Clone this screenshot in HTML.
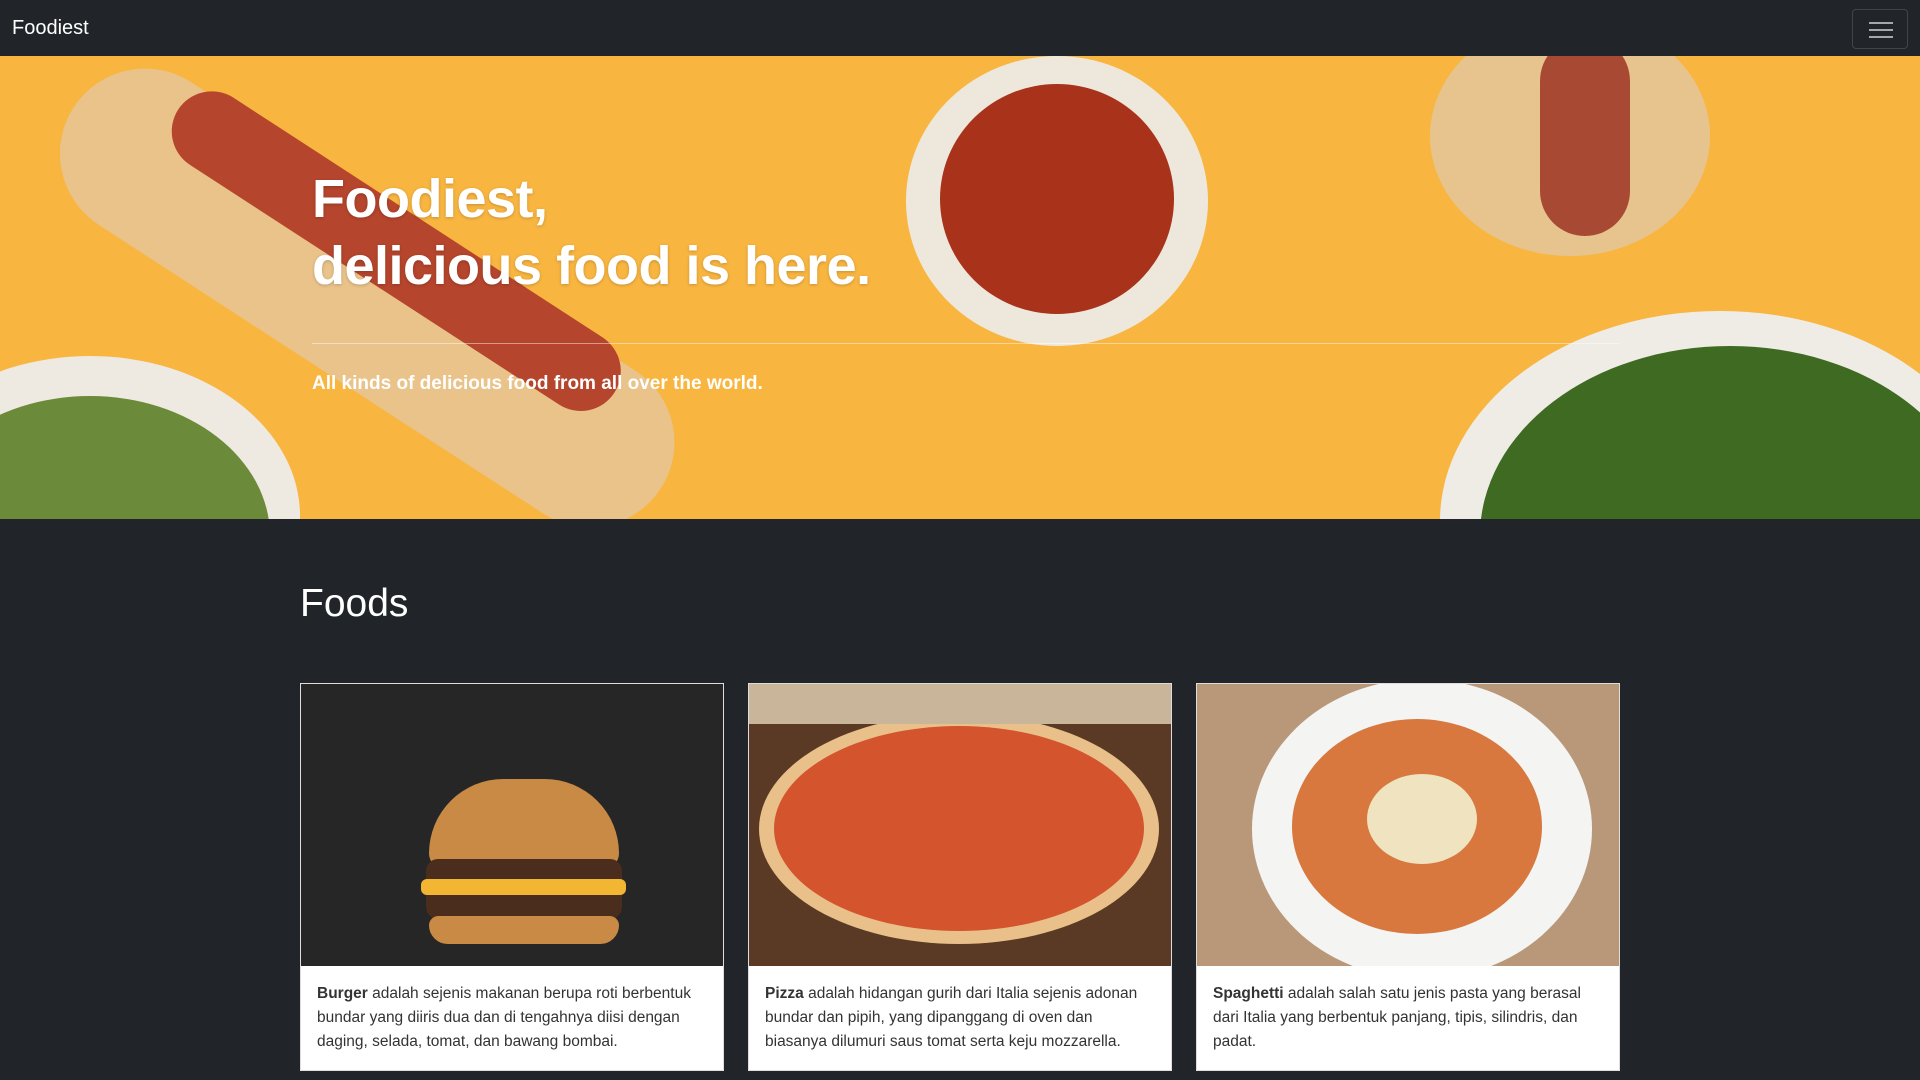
<!DOCTYPE html>
<html><head><meta charset="utf-8"><style>
*{box-sizing:border-box;margin:0;padding:0}
body{width:1920px;height:1080px;overflow:hidden;background:#212529;font-family:"Liberation Sans",sans-serif;}
.nav{height:56px;background:#212529;position:relative}
.brand{position:absolute;left:12px;top:17px;color:#fff;font-size:20px}
.tog{position:absolute;right:12px;top:9px;width:56px;height:40px;border:1px solid rgba(255,255,255,.15);border-radius:4px}
.tog i{position:absolute;left:16px;width:24px;height:2px;background:rgba(255,255,255,.6)}
.hero{position:relative;height:463px;background:#f8b540;overflow:hidden}
.hero .s{position:absolute}
h1.t{position:absolute;left:312px;top:110px;color:#fff;font-size:54px;line-height:67px;font-weight:bold;text-shadow:0 1px 3px rgba(0,0,0,.2);letter-spacing:-0.5px}
.hr{position:absolute;left:312px;top:287px;width:1308px;height:1px;background:rgba(255,255,255,.45)}
.lead{position:absolute;left:312px;top:317px;color:#fff;font-size:19px;font-weight:bold}
h2{position:absolute;left:300px;top:582px;color:#fff;font-size:39px;font-weight:normal}
.card{position:absolute;top:683px;width:424px;height:388px;background:#fff;border:1px solid #ddd}
.img{height:282px;position:relative;overflow:hidden}
.txt{padding:16px;font-size:15.5px;line-height:24px;color:#333}
</style></head><body>
<div class="nav"><div class="brand">Foodiest</div><div class="tog"><i style="top:12px"></i><i style="top:19px"></i><i style="top:26px"></i></div></div>
<div class="hero">
<div class="s" style="width:700px;height:170px;background:#e9c38a;border-radius:90px;transform:rotate(33deg);transform-origin:0 0;left:120px;top:-20px"></div>
<div class="s" style="left:200px;top:20px;width:520px;height:80px;background:#b5452c;border-radius:40px;transform:rotate(33deg);transform-origin:0 0"></div>
<div class="s" style="left:906px;top:0px;width:302px;height:290px;border-radius:50%;background:#eee8dc"></div>
<div class="s" style="left:940px;top:28px;width:234px;height:230px;border-radius:50%;background:#a8321a"></div>
<div class="s" style="left:1430px;top:-40px;width:280px;height:240px;border-radius:50%;background:#e7c48d"></div>
<div class="s" style="left:1540px;top:-20px;width:90px;height:200px;border-radius:45px;background:#a84a33"></div>
<div class="s" style="left:-120px;top:300px;width:420px;height:320px;border-radius:50%;background:#eeeae2"></div>
<div class="s" style="left:-90px;top:340px;width:360px;height:280px;border-radius:50%;background:#6b8a3a"></div>
<div class="s" style="left:1440px;top:255px;width:560px;height:420px;border-radius:50%;background:#efece6"></div>
<div class="s" style="left:1480px;top:290px;width:500px;height:380px;border-radius:50%;background:#3e6a22"></div>
<h1 class="t">Foodiest,<br>delicious food is here.</h1>
<div class="hr"></div>
<div class="lead">All kinds of delicious food from all over the world.</div>
</div>
<h2>Foods</h2>
<div class="card" style="left:300px"><div class="img" style="background:#262626">
<div style="position:absolute;left:128px;top:95px;width:190px;height:90px;border-radius:95px 95px 20px 20px;background:#c98a45"></div>
<div style="position:absolute;left:125px;top:175px;width:196px;height:60px;border-radius:12px;background:#4a2d1d"></div>
<div style="position:absolute;left:120px;top:195px;width:205px;height:16px;background:#f2b632;border-radius:6px"></div>
<div style="position:absolute;left:128px;top:232px;width:190px;height:28px;border-radius:10px 10px 20px 20px;background:#c98a45"></div>
</div><div class="txt"><b>Burger</b> adalah sejenis makanan berupa roti berbentuk bundar yang diiris dua dan di tengahnya diisi dengan daging, selada, tomat, dan bawang bombai.</div></div>
<div class="card" style="left:748px"><div class="img" style="background:#5a3a24">
<div style="position:absolute;left:10px;top:30px;width:400px;height:230px;border-radius:50%;background:#e9c08a"></div>
<div style="position:absolute;left:25px;top:42px;width:370px;height:205px;border-radius:50%;background:#d4542e"></div>
<div style="position:absolute;left:0;top:0;width:424px;height:40px;background:#c9b69a"></div>
</div><div class="txt"><b>Pizza</b> adalah hidangan gurih dari Italia sejenis adonan bundar dan pipih, yang dipanggang di oven dan biasanya dilumuri saus tomat serta keju mozzarella.</div></div>
<div class="card" style="left:1196px"><div class="img" style="background:#b9987a">
<div style="position:absolute;left:55px;top:-5px;width:340px;height:300px;border-radius:50%;background:#f4f4f2"></div>
<div style="position:absolute;left:95px;top:35px;width:250px;height:215px;border-radius:50%;background:#d8783e"></div>
<div style="position:absolute;left:170px;top:90px;width:110px;height:90px;border-radius:50%;background:#efe3c0"></div>
</div><div class="txt"><b>Spaghetti</b> adalah salah satu jenis pasta yang berasal dari Italia yang berbentuk panjang, tipis, silindris, dan padat.</div></div>
</body></html>
